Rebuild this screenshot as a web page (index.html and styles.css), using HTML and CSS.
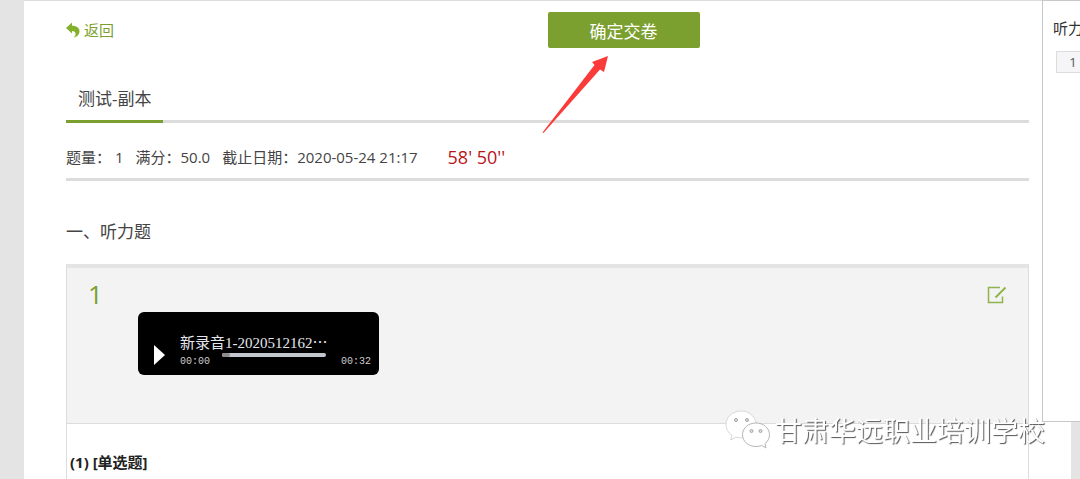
FILE: index.html
```html
<!DOCTYPE html>
<html lang="zh-CN">
<head>
    <meta charset="UTF-8">
    <meta name="viewport" content="width=device-width, initial-scale=1.0">
    <title>测试-副本</title>
    <link rel="stylesheet" href="styles.css">
</head>
<body>
    <main class="page">
        <header class="top-bar">
            <a href="#" class="back">
                <svg class="back-icon" viewBox="0 0 14 16" aria-hidden="true">
                    <path d="M0 6 6 0.5V3.8C11 3.8 13.6 6.500 13.500 9.500C13.400 12.500 11 15 7.500 15.500C10.500 13.500 10.500 9 6 9V11.500Z" fill="#84b02c"/>
                </svg>
                返回
            </a>
            <div class="submit-box">
                <button type="button" class="submit">确定交卷</button>
                <svg class="arrow" viewBox="0 0 68 78" aria-hidden="true">
                    <path d="M66 0 62 16 58 13.500 1.500 77 0.500 76.500 52.500 9 50 6Z" fill="#fb3b3a"/>
                </svg>
            </div>
        </header>

        <div class="tabs">
            <h1 class="tab">测试-副本</h1>
        </div>

        <div class="info">
            <span>题量： 1</span>
            <span>满分：50.0</span>
            <span>截止日期：2020-05-24 21:17</span>
            <strong class="timer">58' 50''</strong>
        </div>

        <h2 class="section-title">一、听力题</h2>

        <section class="question">
            <div class="question-head">
                <span class="number">1</span>
                <div class="player">
                    <button type="button" class="play" aria-label="播放">
                        <svg viewBox="0 0 11 20" aria-hidden="true"><path d="M0 0 11 10 0 20Z" fill="#fff"/></svg>
                    </button>
                    <div class="track">
                        <p class="track-name">新录音1-2020512162<span class="more">…</span></p>
                        <div class="track-row">
                            <span>00:00</span>
                            <div class="progress"><div class="loaded"></div></div>
                            <span class="duration">00:32</span>
                        </div>
                    </div>
                </div>
                <button type="button" class="edit" aria-label="标记">
                    <svg viewBox="0 0 20 18" fill="none" stroke="#8fb44c" aria-hidden="true">
                        <path d="M13 1.500H1.500V16.500H15.500V10.500" stroke-width="1.500"/>
                        <path d="M8.500 11.500 18.500 1.500" stroke-width="2"/>
                    </svg>
                </button>
            </div>
            <p class="sub-question">(1) [单选题]</p>
        </section>
    </main>

    <aside class="side">
        <h3 class="side-title">听力题</h3>
        <a href="#" class="side-item">1</a>
    </aside>

    <div class="watermark">
        <svg class="wechat" viewBox="0 0 46 40" aria-hidden="true">
            <g fill="#fff">
                <path d="M16.500 1C7.500 1 1 7 1 14.500C1 19 3.300 22.700 7 25.200L5.500 30 11 27.200C16 28.500 21 28 25 25.500C31 21.500 33 14 29.500 8.500C27 4 22 1 16.500 1Z" stroke="#d6d6d6"/>
                <path d="M31 13C23.500 13 17.500 18 17.500 24.700C17.500 31.500 23.500 36.500 31 36.500C33 36.500 35 36.200 36.700 35.500L41 38 40 33.500C43 31.300 44.500 28.200 44.500 24.700C44.500 18 38.500 13 31 13Z" stroke="#b5b5b5"/>
            </g>
            <g fill="#ddd" stroke="#a5a5a5">
                <circle cx="11" cy="10" r="1.500"/>
                <circle cx="22" cy="10" r="1.500"/>
                <circle cx="26.500" cy="21" r="1.500"/>
                <circle cx="35.500" cy="21" r="1.500"/>
            </g>
        </svg>
        <span>甘肃华远职业培训学校</span>
    </div>
</body>
</html>
```

FILE: styles.css
```css
/* Basic reset and body styling */
* {
    box-sizing: border-box;
    margin: 0;
    padding: 0;
}

body {
    font-family: "Open Sans", "Noto Sans CJK SC", sans-serif;
    font-size: 15px;
    line-height: 24px;
    color: #444;
    background: #e4e4e4;
}

button {
    border: none;
    background: none;
    font-family: inherit;
    cursor: pointer;
}

a {
    color: inherit;
    text-decoration: none;
}

svg {
    display: block;
}

.page {
    display: flex;
    flex-direction: column;
    min-height: 100vh;
    margin: 0 9px 0 24px;
    padding: 11px 42px 0;
    background: #fff;
    border-top: 1px solid #dcdce0;
}

/* Back link and submit button */
.top-bar {
    display: grid;
    grid-template-columns: 1fr 1fr;
    align-items: center;
}

.back {
    display: flex;
    align-items: center;
    gap: 4px;
    color: #7ba02f;
}

.back-icon {
    width: 14px;
    height: 16px;
}

.submit-box {
    position: relative;
}

.submit {
    display: block;
    width: 152px;
    height: 36px;
    border-radius: 2px;
    background: #7ba02f;
    color: #fff;
    font-size: 17px;
}

.arrow {
    position: absolute;
    top: 44px;
    left: -6px;
    width: 68px;
    height: 78px;
}

/* Title tab */
.tabs {
    display: flex;
    margin-top: 37px;
    border-bottom: 3px solid #dcdcdc;
}

.tab {
    margin-bottom: -3px;
    padding: 0 12px 7px;
    border-bottom: 3px solid #7ba02f;
    font-size: 17px;
    font-weight: normal;
    line-height: 28px;
}

.info {
    display: flex;
    gap: 12px;
    padding: 22px 0 9px;
    border-bottom: 3px solid #dcdcdc;
}

.timer {
    margin-left: 18px;
    color: #b8141b;
    font-size: 18px;
    font-weight: normal;
}

.section-title {
    margin: 39px 0 20px;
    font-size: 17px;
    font-weight: normal;
    line-height: 24px;
}

/* Question block */
.question {
    flex: 1;
    border: 1px solid #dcdcdc;
    border-top: 4px solid #e4e4e4;
    border-bottom: none;
}

.question-head {
    display: flex;
    align-items: flex-start;
    height: 156px;
    padding: 12px 21px 0;
    border-bottom: 1px solid #dcdcdc;
    background: #f3f3f3;
}

.number {
    width: 50px;
    color: #7ba02f;
    font-size: 26px;
    line-height: 28px;
}

.player {
    display: flex;
    width: 241px;
    height: 63px;
    margin-top: 32px;
    padding: 20px 8px 0 16px;
    border-radius: 6px;
    background: #000;
}

.play {
    width: 26px;
    padding-top: 13px;
    align-self: flex-start;
}

.play svg {
    width: 11px;
    height: 20px;
}

.track {
    flex: 1;
}

.track-name {
    height: 20px;
    color: #e4e8ee;
    font-family: "Liberation Serif", "Noto Sans CJK SC", serif;
    line-height: 20px;
}

.more {
    font-family: "Noto Sans CJK SC", sans-serif;
}

.track-row {
    display: flex;
    color: #ccc;
    font-family: "Liberation Mono", monospace;
    font-size: 10px;
    line-height: 20px;
}

.progress {
    width: 104px;
    height: 4px;
    margin: 1px 0 0 12px;
    border-radius: 2px;
    background: #c3c7cf;
}

.loaded {
    width: 8px;
    height: 4px;
    border-radius: 2px;
    background: #8e8b8b;
}

.duration {
    margin-left: auto;
}

.edit {
    margin: 6px 0 0 auto;
}

.edit svg {
    width: 20px;
    height: 18px;
}

.sub-question {
    padding: 26px 3px 0;
    color: #222;
    font-size: 15px;
    font-weight: bold;
}

/* Answer sheet at the right edge */
.side {
    position: fixed;
    top: 0;
    right: 0;
    width: 38px;
    height: 422px;
    padding: 16px 0 0 10px;
    overflow: hidden;
    border: 1px solid #c8c8cc;
    border-right: none;
    background: #fff;
    white-space: nowrap;
}

.side-title {
    color: #333;
    font-size: 15px;
    font-weight: normal;
    line-height: 22px;
}

.side-item {
    display: block;
    width: 34px;
    margin: 12px 0 0 3px;
    border: 1px solid #dcdcdc;
    background: #f5f5f8;
    color: #555;
    font-size: 13px;
    line-height: 20px;
    text-align: center;
}

/* Watermark */
.watermark {
    position: fixed;
    right: 35px;
    bottom: 29px;
    display: flex;
    align-items: center;
    gap: 4px;
    color: #fff;
    font-family: "Noto Sans CJK SC", sans-serif;
    font-size: 27px;
    line-height: 40px;
    text-shadow: 1px 1px 1px #555;
}

.wechat {
    width: 46px;
    height: 40px;
}
```
